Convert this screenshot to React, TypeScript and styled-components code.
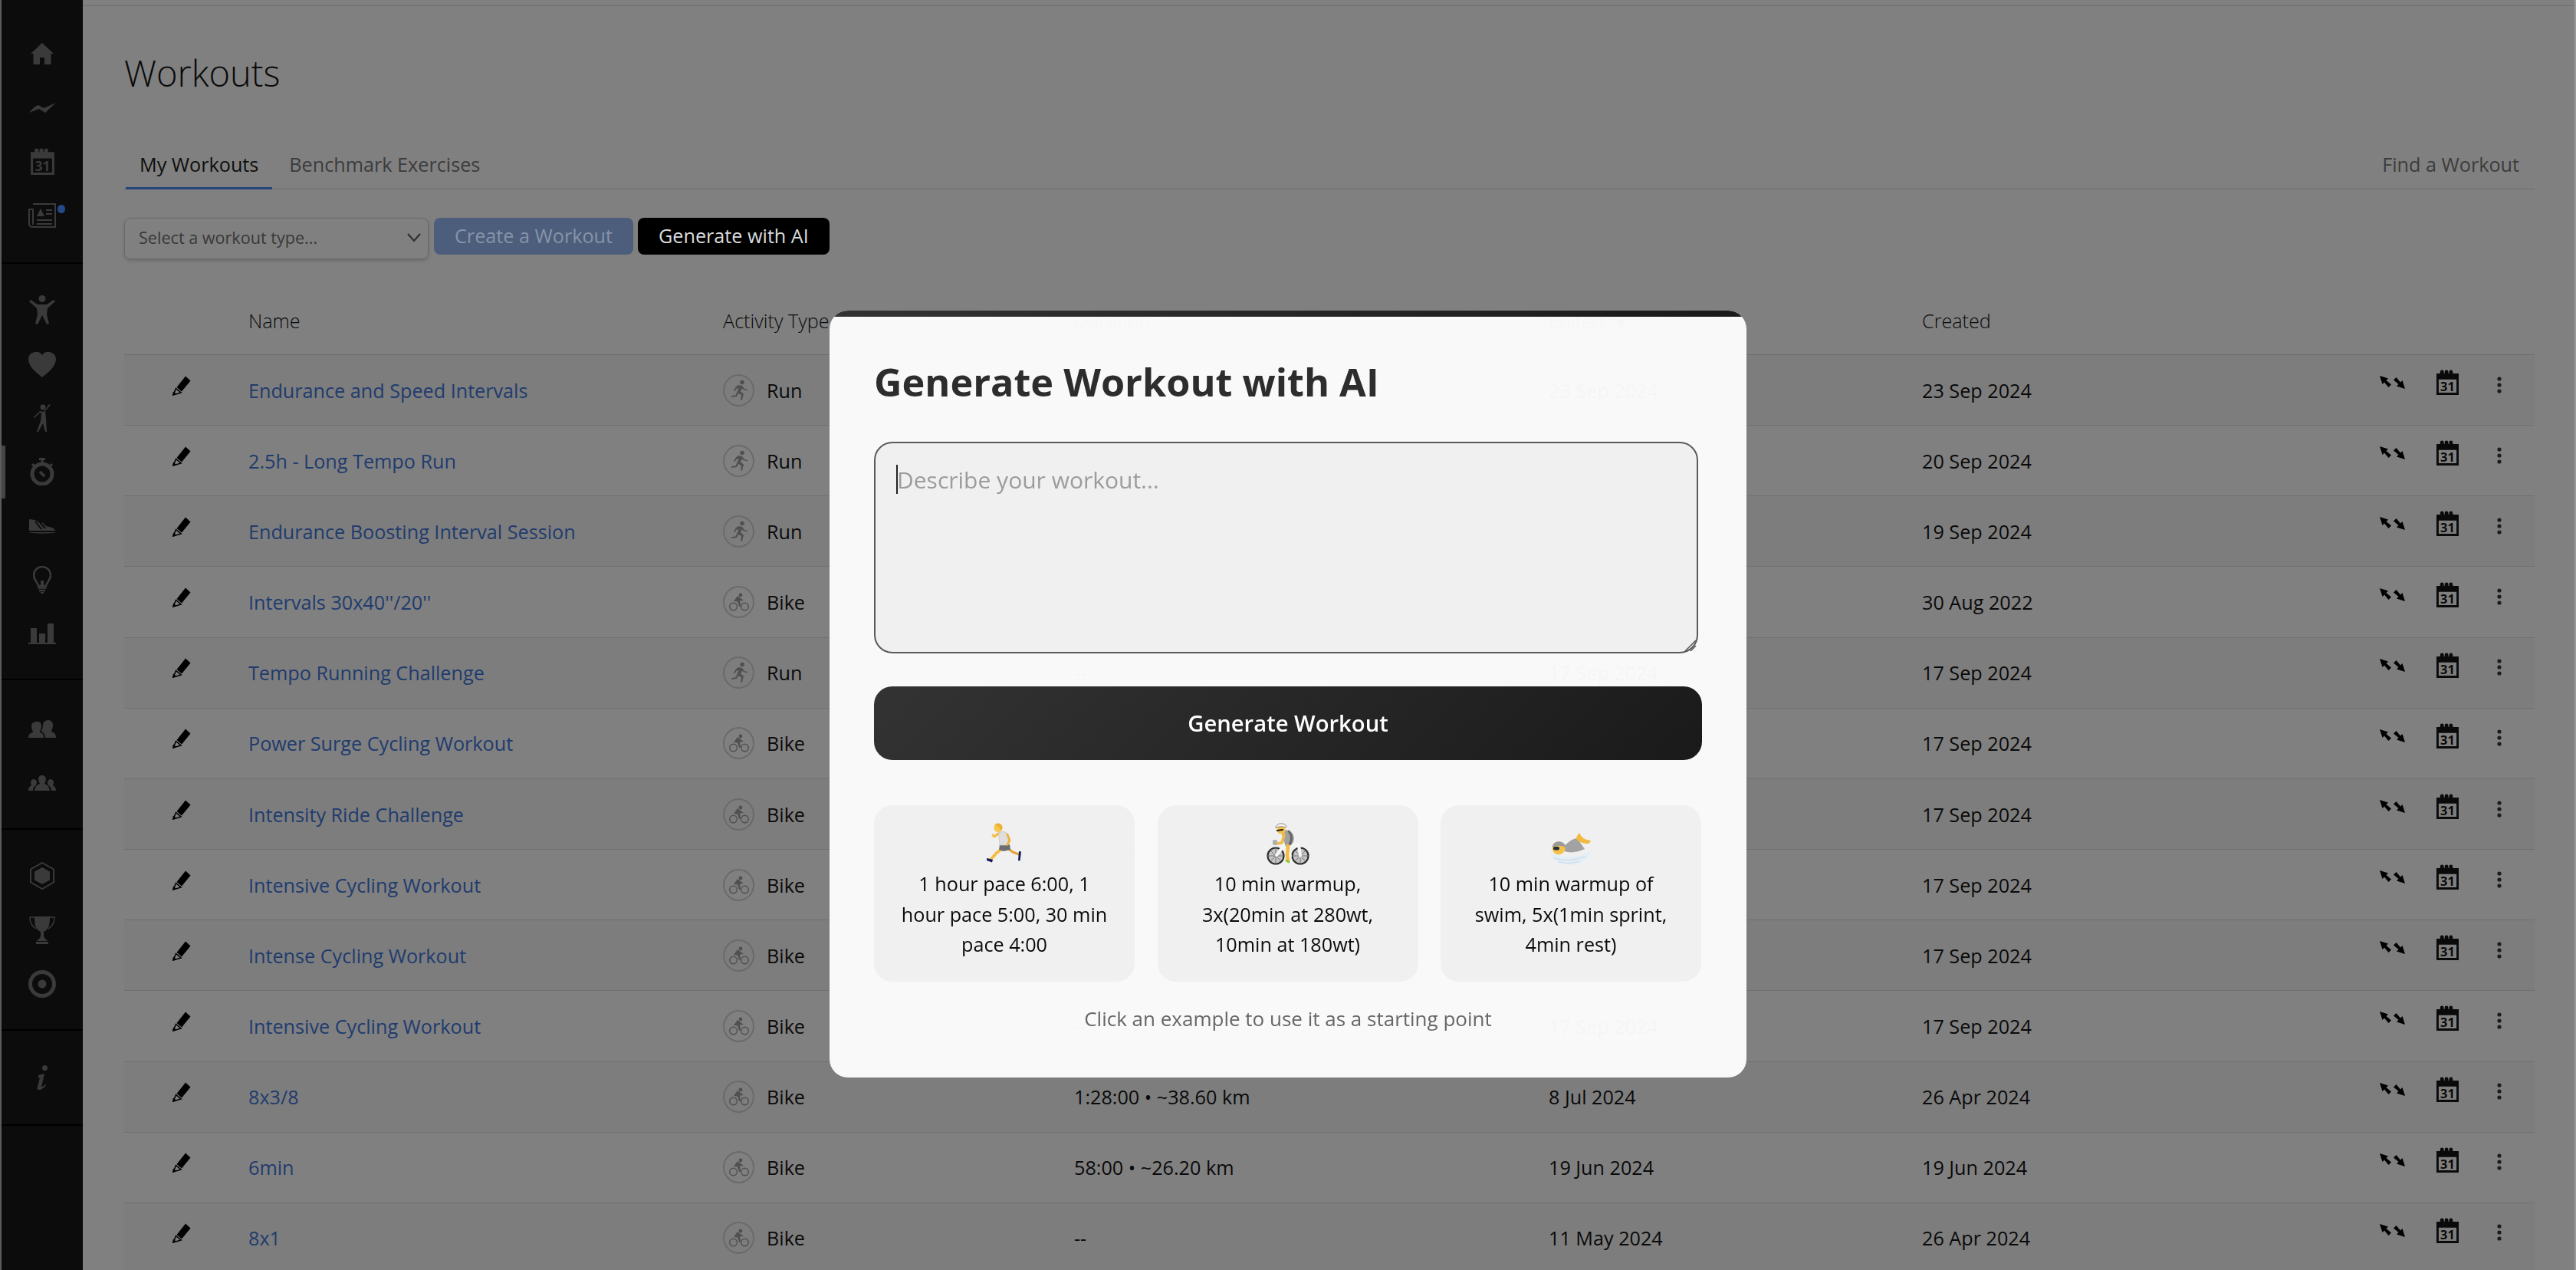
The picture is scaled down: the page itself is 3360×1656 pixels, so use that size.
import styled, { createGlobalStyle } from 'styled-components';
import { ReactNode } from 'react';

const GlobalStyle = createGlobalStyle`
  html, body {
    margin: 0;
    height: 100%;
    overflow: hidden;
    background: #808080;
    font-family: "Open Sans", "Liberation Sans", sans-serif;
  }
  * { box-sizing: border-box; }
`;

const Shell = styled.div`
  display: flex;
  width: 3360px;
  height: 1656px;
  overflow: hidden;
  background: #808080;
`;

const LeftEdge = styled.div`
  width: 2px;
  background: #5c5c5c;
`;

const ScrollEdge = styled.div`
  width: 2px;
  background: #999;
`;

const Sidebar = styled.nav`
  position: relative;
  width: 106px;
  flex-shrink: 0;
  background: #0c0c0c;
  color: #3a3a3a;
`;

const NavSection = styled.div<{ $height: number; $top: number }>`
  height: ${(p) => p.$height}px;
  padding-top: ${(p) => p.$top}px;
  border-bottom: 2px solid #000;
`;

const NavItem = styled.div`
  position: relative;
  height: 70.4px;
  display: flex;
  align-items: center;
  justify-content: center;
`;

const NewsDot = styled.span`
  position: absolute;
  top: 21px;
  left: 73px;
  width: 10px;
  height: 11px;
  border-radius: 50%;
  background: #254a8a;
`;

const ActiveMark = styled.span`
  position: absolute;
  left: 0;
  top: 581px;
  width: 5px;
  height: 69px;
  background: #464646;
`;

const Main = styled.main`
  flex: 1;
  min-width: 0;
`;

const TopRule = styled.div`
  height: 8px;
  border-bottom: 1px solid #6c6c6c;
`;

const Content = styled.div`
  padding: 0 52px 0 54px;
`;

const Title = styled.h1`
  margin: 0;
  padding-top: 54px;
  height: 121px;
  font-size: 47px;
  line-height: 66px;
  font-weight: 300;
  color: #0a0a0a;
`;

const Tabs = styled.div`
  display: flex;
  height: 118px;
  align-items: flex-end;
  border-bottom: 1px solid #6c6c6c;
`;

const Tab = styled.div<{ $active?: boolean }>`
  height: 62px;
  padding: 0 18px;
  margin: ${(p) => (p.$active ? '0 4px 0 2px' : '0')};
  margin-bottom: -1px;
  line-height: 58px;
  font-size: 25.2px;
  color: ${(p) => (p.$active ? '#0e0e0e' : '#3c3c3c')};
  border-bottom: 3px solid ${(p) => (p.$active ? '#254479' : 'transparent')};
`;

const FindLink = styled(Tab)`
  margin-left: auto;
  padding-right: 20px;
`;

const Toolbar = styled.div`
  display: flex;
  align-items: flex-start;
  gap: 6px;
  padding-top: 37px;
  height: 159px;
`;

const SelectBox = styled.div`
  width: 397px;
  height: 54px;
  margin-right: 1px;
  padding: 0 8px 3px 18px;
  display: flex;
  align-items: center;
  justify-content: space-between;
  font-size: 21.6px;
  color: #383838;
  border: 1px solid #6a6a6a;
  border-radius: 8px;
  box-shadow: 0 2px 4px rgba(0, 0, 0, 0.18);
`;

const ActionButton = styled.div<{ $dark?: boolean }>`
  height: 48px;
  padding: 0 27px;
  line-height: 46px;
  font-size: 25.2px;
  border-radius: 8px;
  background: ${(p) => (p.$dark ? '#000' : '#4c5e7c')};
  color: ${(p) => (p.$dark ? '#dcdcdc' : '#8693a8')};
`;

const GRID = '162px 619px 458px 619px 487px 553px 1fr';

const HeaderRow = styled.div`
  display: grid;
  grid-template-columns: ${GRID};
  height: 57px;
  border-bottom: 1px solid #6c6c6c;
  font-size: 25.2px;
  font-weight: 300;
  line-height: 24px;
  color: #0a0a0a;
`;

const SortArrow = styled.span`
  margin-left: 14px;
  font-size: 18px;
`;

const Row = styled.div<{ $striped: boolean }>`
  display: grid;
  grid-template-columns: ${GRID};
  height: 92.17px;
  border-bottom: 1px solid #6f6f6f;
  background: ${(p) => (p.$striped ? '#7d7d7d' : '#808080')};
  font-size: 25.2px;
  color: #0a0a0a;
`;

const Cell = styled.div`
  display: flex;
  align-items: center;
  min-width: 0;
`;

const PencilCell = styled(Cell)`
  padding: 0 0 12px 62px;
`;

const NameLink = styled.a`
  color: #203b6e;
  text-decoration: none;
`;

const Badge = styled.span`
  width: 41px;
  height: 42px;
  margin-right: 16px;
  display: flex;
  align-items: center;
  justify-content: center;
  border: 2px solid #6a6a6a;
  border-radius: 50%;
  color: #505050;
`;

const ActionsCell = styled(Cell)`
  padding: 0 0 20px 44px;
  gap: 41px;
`;

const Dots = styled.svg`
  margin: 6px 0 0 8px;
`;

const Overlay = styled.div`
  position: fixed;
  inset: 0;
  display: flex;
  justify-content: center;
  align-items: flex-start;
  padding-top: 405px;
`;

const Modal = styled.div`
  position: relative;
  width: 1196px;
  padding: 58px 58px 58px;
  border-radius: 24px;
  overflow: hidden;
  background: rgba(253, 253, 253, 0.97);

  &::before {
    content: '';
    position: absolute;
    top: 0;
    left: 0;
    right: 0;
    height: 8px;
    background: linear-gradient(90deg, #333, #1a1a1a);
  }
`;

const ModalTitle = styled.h2`
  margin: 0 0 43px;
  height: 70px;
  font-size: 50.4px;
  line-height: 70px;
  font-weight: 700;
  color: #2d2d2d;
`;

const PromptBox = styled.div`
  position: relative;
  width: 1075px;
  height: 276px;
`;

const Prompt = styled.textarea`
  display: block;
  width: 100%;
  height: 100%;
  padding: 28px 28px;
  font-family: "Open Sans", "Liberation Sans", sans-serif;
  font-size: 30px;
  line-height: 40px;
  color: #222;
  background: #f0f0f0;
  border: 2px solid #5a5a5a;
  border-radius: 24px;
  outline: none;
  resize: none;

  &::placeholder {
    color: #9c9c9c;
  }
`;

const Caret = styled.span`
  position: absolute;
  left: 29px;
  top: 30px;
  width: 2px;
  height: 38px;
  background: #222;
`;

const ResizeGrip = styled.svg`
  position: absolute;
  right: 2px;
  bottom: 2px;
`;

const GenerateButton = styled.div`
  margin-top: 43px;
  width: 1080px;
  height: 96px;
  line-height: 97px;
  text-align: center;
  font-size: 29.2px;
  font-weight: 600;
  color: #fff;
  border-radius: 24px;
  background: linear-gradient(135deg, #333, #1a1a1a);
`;

const Examples = styled.div`
  display: grid;
  grid-template-columns: repeat(3, 340px);
  gap: 29.5px;
  margin-top: 59px;
`;

const ExampleCard = styled.div`
  height: 230px;
  padding: 23px 32px 0;
  text-align: center;
  font-size: 25.2px;
  line-height: 39.5px;
  color: #0a0a0a;
  background: #f0f0f0;
  border-radius: 24px;
`;

const EmojiBox = styled.div`
  height: 60px;
  display: flex;
  justify-content: center;
`;

const Hint = styled.div`
  margin-top: 29px;
  text-align: center;
  font-size: 26px;
  line-height: 38px;
  color: #666;
`;

const CalendarGlyph = ({ w, h }: { w: number; h: number }) => (
  <svg width={w} height={h} viewBox="0 0 30 34" fill="currentColor">
    <path fillRule="evenodd" d="M0 5h5V3a2.5 2.5 0 0 1 5 0v2h1V3a2.5 2.5 0 0 1 5 0v2h1V3a2.5 2.5 0 0 1 5 0v2h8v29H0zM3 13v18h24V13z" />
    <text x="15" y="29" fontSize="17" fontWeight="700" textAnchor="middle" fontFamily="'Open Sans', sans-serif">31</text>
  </svg>
);

const navIcons: Record<string, ReactNode> = {
  home: (
    <svg width="30" height="28" viewBox="0 0 30 28" fill="currentColor">
      <path d="M15 0l15 14h-3.500v14H18v-9h-6v9H3.500V14H0z" />
    </svg>
  ),
  wave: (
    <svg width="35" height="13" viewBox="0 0 35 13" fill="currentColor">
      <path d="M0 13C4 8 8 4 12 3l7 4 16-7-14 13-8-5c-4 1-8 3-13 5z" />
    </svg>
  ),
  calendar: <CalendarGlyph w={31} h={35} />,
  news: (
    <svg width="36" height="32" viewBox="0 0 36 32" fill="none" stroke="currentColor" strokeWidth="2">
      <path d="M6 1h29v30H5a4 4 0 0 1-4-4V8h5v20" />
      <path d="M11 22h20M11 27h20M23 9h8M23 14h8" />
      <path d="M11 17l5-10 5 10z" fill="currentColor" stroke="none" />
    </svg>
  ),
  person: (
    <svg width="34" height="38" viewBox="0 0 34 38" fill="currentColor">
      <circle cx="17" cy="4.500" r="4.500" />
      <path d="M0 8l2-2 9 6h12l9-6 2 2-10 9-1 8 3 12-3 1-6-12-6 12-3-1 3-12-1-8z" />
    </svg>
  ),
  heart: (
    <svg width="36" height="34" viewBox="0 0 36 34" fill="currentColor">
      <path d="M18 34C8 26 0 19 0 10A10 10 0 0 1 18 5a10 10 0 0 1 18 5c0 9-8 16-18 24z" />
    </svg>
  ),
  golf: (
    <svg width="22" height="36" viewBox="0 0 22 36" fill="currentColor">
      <circle cx="12" cy="4" r="3.500" />
      <path d="M20 0l2 1-7 8 1 10 1 17h-2l-3-11-6 11H4l5-14 1-10-2-1-7 7-1-1 8-8 5 1z" />
    </svg>
  ),
  stopwatch: (
    <svg width="32" height="36" viewBox="0 0 32 36" fill="none" stroke="currentColor">
      <circle cx="16" cy="21" r="13" strokeWidth="5" />
      <path d="M12 1.500h8M16 2v5M3 8l4 4M29 8l-4 4" strokeWidth="3" />
      <path d="M13 18l6 6" strokeWidth="3.500" />
    </svg>
  ),
  shoe: (
    <svg width="36" height="20" viewBox="0 0 36 20" fill="currentColor">
      <path d="M1 1l7 1 9 5 1-2 5 5 8 2 4 3v1H1zM0 18h36c-3 2-30 2-36 0z" />
      <path d="M9 4l8 10M14 4l8 9" stroke="#0c0c0c" strokeWidth="2" />
    </svg>
  ),
  bulb: (
    <svg width="24" height="36" viewBox="0 0 24 36" fill="none" stroke="currentColor" strokeWidth="2.500">
      <path d="M7 26C6 21 1 18 1 12a11 11 0 0 1 22 0c0 6-5 9-6 14z" />
      <path d="M6.500 28.500h11M8 32h8" strokeWidth="2.500" />
      <path d="M12 26v-7" strokeWidth="4" />
      <path d="M10 35h4" strokeWidth="2" />
    </svg>
  ),
  bars: (
    <svg width="36" height="27" viewBox="0 0 36 27" fill="currentColor">
      <path d="M3 6h8v19H3zM14 13h8v12h-8zM25 0h8v25h-8zM0 25h36v2H0z" />
    </svg>
  ),
  people: (
    <svg width="36" height="23" viewBox="0 0 36 23" fill="currentColor">
      <path d="M12 2c3 0 5 2 5 6s-2 6-2 8c4 1 5 3 5 7H0c0-4 2-6 6-7 0-2-2-4-2-8s3-6 8-6z" />
      <path d="M26 0c4 0 6 3 6 7s-2 6-2 8c4 1 6 4 6 8H22c0-4-2-7-5-8 0-2 2-4 2-8s3-7 7-7z" />
    </svg>
  ),
  group: (
    <svg width="36" height="20" viewBox="0 0 36 20" fill="currentColor">
      <path d="M18 0c3 0 5 2 5 5s-2 5-2 6c4 1 6 4 7 9H8c1-5 3-8 7-9 0-1-2-3-2-6s2-5 5-5z" />
      <path d="M7 5c2 0 4 2 4 4s-1 3-1 4c-2 1-4 3-4 7H0c0-4 2-6 4-7 0-1-1-2-1-4s2-4 4-4zM29 5c2 0 4 2 4 4s-1 3-1 4c2 1 4 3 4 7h-6c0-4-2-6-4-7 0-1-1-2-1-4s2-4 4-4z" />
    </svg>
  ),
  hexagon: (
    <svg width="32" height="36" viewBox="0 0 32 36" fill="currentColor">
      <path d="M16 1l15 8.500v17L16 35 1 26.500v-17z" fill="none" stroke="currentColor" strokeWidth="2" />
      <path d="M16 7l10 5.500v11L16 29 6 23.500v-11z" />
    </svg>
  ),
  trophy: (
    <svg width="34" height="36" viewBox="0 0 34 36" fill="currentColor">
      <path d="M7 0h20c0 10-1 17-8 20v6c1 3 4 4 5 6H10c1-2 4-3 5-6v-6C8 17 7 10 7 0zM9 33h16v3H9z" />
      <path d="M7 1H1c0 7 3 12 8 15M27 1h6c0 7-3 12-8 15" fill="none" stroke="currentColor" strokeWidth="1.500" />
    </svg>
  ),
  target: (
    <svg width="36" height="36" viewBox="0 0 36 36" fill="none" stroke="currentColor">
      <circle cx="18" cy="18" r="15.500" strokeWidth="5" />
      <circle cx="18" cy="18" r="5.500" fill="currentColor" stroke="none" />
    </svg>
  ),
  info: (
    <svg width="14" height="34" viewBox="0 0 14 34" fill="currentColor">
      <circle cx="10.500" cy="3.500" r="3.500" />
      <path d="M2 13l8-2-4 17c2 0 3-1 5-3l1 1c-3 4-6 6-9 6-2 0-3-1-2-4l3-12-2 .5z" />
    </svg>
  ),
};

const PencilIcon = () => (
  <svg width="25" height="26" viewBox="0 0 25 26">
    <path d="M6.500 15L18 0.500l6.500 6L13 20.500z" fill="#000" />
    <path d="M5.500 16.500l6.500 5.500-10 3z" fill="none" stroke="#000" strokeWidth="1.600" />
    <path d="M1 25.500l1-5 4 3.500z" fill="#000" />
  </svg>
);

const ExpandIcon = () => (
  <svg width="33" height="17" viewBox="0 0 33 17" fill="#000">
    <path d="M0 0L11 3.500 8.500 6 15 11.500 11.500 15 6 8.500 3.500 11z" />
    <path d="M33 17L22 13.500 24.500 11 18 5.500 21.500 2 27 8.500 29.500 6z" />
  </svg>
);

const RunGlyph = () => (
  <svg width="24" height="28" viewBox="0 0 24 28" fill="currentColor">
    <circle cx="16" cy="3.500" r="2.800" />
    <path d="M11 7l5 1 3 4 4 1-.5 1.500-5-1.500-1.500-1.500-2 4 4 3-2 8h-2l1-6.500-4-2-2 4-7 1 .000-1.800 5.500-1 4-9-3 .5-2 3.500-1.500-1 3-5z" />
  </svg>
);

const BikeGlyph = () => (
  <svg width="26" height="24" viewBox="0 0 26 24" fill="none" stroke="currentColor" strokeWidth="1.400">
    <circle cx="5.500" cy="18" r="4.800" />
    <circle cx="20.500" cy="18" r="4.800" />
    <circle cx="15" cy="3" r="2.400" fill="currentColor" stroke="none" />
    <path d="M6 11l5-7 4 3 4 3-5 .5 1 7-2 .5-2-6.500z" fill="currentColor" stroke="none" />
  </svg>
);

const RunnerEmoji = () => (
  <svg width="48" height="52" viewBox="0 0 48 52" fill="none" strokeLinecap="round" strokeLinejoin="round">
    <path d="M28 33l7 5 8 3" stroke="#e5a735" strokeWidth="3.200" />
    <path d="M22 33l-8 6-7 8" stroke="#f4bd45" strokeWidth="4" />
    <path d="M43 37l-1 12 2.500 .5 1.500-12z" fill="#141c5c" />
    <path d="M1 46l5 1 3 1-1 3.500-7-2.500z" fill="#141c5c" />
    <path d="M18 28h13l1 7-9 2-6-2z" fill="#6e6e6e" />
    <path d="M16 13c4-2 9-2 12 1l2 7-1 8H18c0-5-1-10-2-16z" fill="#dedede" stroke="#c4c4c4" strokeWidth="0.800" />
    <path d="M16 14l-5 4-2-2" stroke="#f4bd45" strokeWidth="3" />
    <path d="M28 15l3 8-3 5" stroke="#eeb23e" strokeWidth="3" />
    <circle cx="16" cy="6.500" r="5.500" fill="#f7c64e" />
    <path d="M11 3c3-4 9-3 10 1 1 3 0 5-1 6-1-3-5-6-9-7z" fill="#eab136" />
  </svg>
);

const CyclistEmoji = () => (
  <svg width="58" height="56" viewBox="0 0 58 56" fill="none" strokeLinecap="round" strokeLinejoin="round">
    <circle cx="13" cy="43" r="10.500" fill="#c4c4c4" stroke="#2e2e2e" strokeWidth="2.200" />
    <circle cx="45" cy="43" r="10.500" fill="#c4c4c4" stroke="#2e2e2e" strokeWidth="2.200" />
    <path d="M13 33v20M3 43h20M6 36l14 14M20 36L6 50M45 33v20M35 43h20M38 36l14 14M52 36L38 50" stroke="#777" strokeWidth="1" />
    <path d="M14 42l11-14 18 1 2 14M25 28l7 15" stroke="#f6f6f6" strokeWidth="4" />
    <path d="M20 12c5-4 11-3 15 2 3 5 2 11-2 15l-7 2z" fill="#a0a0a0" />
    <path d="M30 11c4 4 5 11 1 17" stroke="#666" strokeWidth="3" />
    <path d="M24 15l-3 11-7 1" stroke="#f3bb42" strokeWidth="3.500" />
    <path d="M29 30l-1 12 1 7" stroke="#f3bb42" strokeWidth="4.500" />
    <path d="M27 49l3 2" stroke="#97c63c" strokeWidth="3" />
    <rect x="9" y="22" width="6" height="7" rx="2" fill="#b0b0b0" />
    <circle cx="20" cy="9" r="5.500" fill="#f5c14a" />
    <path d="M13 6c1-6 10-7 14-2l-1 2C21 4 17 5 13 6z" fill="#f6f6f6" stroke="#8a8a8a" strokeWidth="1" />
    <path d="M15 10l7-1" stroke="#1c1c1c" strokeWidth="2.200" />
  </svg>
);

const SwimmerEmoji = () => (
  <svg width="60" height="56" viewBox="0 -12 60 56" fill="none" strokeLinecap="round" strokeLinejoin="round">
    <path d="M2 26c12 8 36 8 54-1-4 10-12 18-26 18C16 43 6 36 2 26z" fill="#e4eef5" />
    <path d="M8 34c12 4 26 3 40-2M14 39c9 2 18 2 27-1" stroke="#cfe0ec" strokeWidth="1.500" />
    <path d="M20 20c6-7 11-11 18-12l10 14c-8 4-19 6-26 3z" fill="#a2a2a2" />
    <path d="M37 9c0-3 2-6 4-8 2 5 6 9 15 10-1 2-2 4-3 4-7 0-12-2-16-6z" fill="#f2b93f" />
    <circle cx="14" cy="21" r="8.500" fill="#f5c14a" />
    <path d="M6 20c0-7 8-10 14-6 2 2 3 4 3 6-6-3-12-3-17 0z" fill="#9a9a9a" />
    <rect x="7" y="19" width="8" height="4.500" rx="2.200" fill="#1f2d3a" />
  </svg>
);

const navSections = [
  { height: 344, top: 35, items: ['home', 'wave', 'calendar', 'news'] },
  { height: 543, top: 25, items: ['person', 'heart', 'golf', 'stopwatch', 'shoe', 'bulb', 'bars'] },
  { height: 195, top: 28, items: ['people', 'group'] },
  { height: 262, top: 25, items: ['hexagon', 'trophy', 'target'] },
  { height: 124, top: 27, items: ['info'] },
];

interface Workout {
  name: string;
  activity: 'Run' | 'Bike';
  duration: string;
  edited: string;
  created: string;
}

const workouts: Workout[] = [
  { name: 'Endurance and Speed Intervals', activity: 'Run', duration: '--', edited: '23 Sep 2024', created: '23 Sep 2024' },
  { name: '2.5h - Long Tempo Run', activity: 'Run', duration: '--', edited: '20 Sep 2024', created: '20 Sep 2024' },
  { name: 'Endurance Boosting Interval Session', activity: 'Run', duration: '--', edited: '19 Sep 2024', created: '19 Sep 2024' },
  { name: "Intervals 30x40''/20''", activity: 'Bike', duration: '--', edited: '30 Aug 2022', created: '30 Aug 2022' },
  { name: 'Tempo Running Challenge', activity: 'Run', duration: '--', edited: '17 Sep 2024', created: '17 Sep 2024' },
  { name: 'Power Surge Cycling Workout', activity: 'Bike', duration: '--', edited: '17 Sep 2024', created: '17 Sep 2024' },
  { name: 'Intensity Ride Challenge', activity: 'Bike', duration: '--', edited: '17 Sep 2024', created: '17 Sep 2024' },
  { name: 'Intensive Cycling Workout', activity: 'Bike', duration: '--', edited: '17 Sep 2024', created: '17 Sep 2024' },
  { name: 'Intense Cycling Workout', activity: 'Bike', duration: '--', edited: '17 Sep 2024', created: '17 Sep 2024' },
  { name: 'Intensive Cycling Workout', activity: 'Bike', duration: '--', edited: '17 Sep 2024', created: '17 Sep 2024' },
  { name: '8x3/8', activity: 'Bike', duration: '1:28:00 • ~38.60 km', edited: '8 Jul 2024', created: '26 Apr 2024' },
  { name: '6min', activity: 'Bike', duration: '58:00 • ~26.20 km', edited: '19 Jun 2024', created: '19 Jun 2024' },
  { name: '8x1', activity: 'Bike', duration: '--', edited: '11 May 2024', created: '26 Apr 2024' },
];

const examples = [
  { emoji: <RunnerEmoji />, text: '1 hour pace 6:00, 1 hour pace 5:00, 30 min pace 4:00' },
  { emoji: <CyclistEmoji />, text: '10 min warmup, 3x(20min at 280wt, 10min at 180wt)' },
  { emoji: <SwimmerEmoji />, text: '10 min warmup of swim, 5x(1min sprint, 4min rest)' },
];

function App() {
  return (
    <Shell>
      <GlobalStyle />
      <LeftEdge />
      <Sidebar>
        <ActiveMark />
        {navSections.map((section) => (
          <NavSection key={section.items[0]} $height={section.height} $top={section.top}>
            {section.items.map((item) => (
              <NavItem key={item}>
                {navIcons[item]}
                {item === 'news' && <NewsDot />}
              </NavItem>
            ))}
          </NavSection>
        ))}
      </Sidebar>
      <Main>
        <TopRule />
        <Content>
          <Title>Workouts</Title>
          <Tabs>
            <Tab $active>My Workouts</Tab>
            <Tab>Benchmark Exercises</Tab>
            <FindLink>Find a Workout</FindLink>
          </Tabs>
          <Toolbar>
            <SelectBox>
              Select a workout type...
              <svg width="20" height="14" viewBox="0 0 20 14" fill="none" stroke="#2c2c2c" strokeWidth="2">
                <path d="M2 2l8 9 8-9" />
              </svg>
            </SelectBox>
            <ActionButton>Create a Workout</ActionButton>
            <ActionButton $dark>Generate with AI</ActionButton>
          </Toolbar>
          <HeaderRow>
            <span />
            <span>Name</span>
            <span>Activity Type</span>
            <span>Duration</span>
            <span>Edited<SortArrow>▼</SortArrow></span>
            <span>Created</span>
            <span />
          </HeaderRow>
          {workouts.map((workout, index) => (
            <Row key={index} $striped={index % 2 === 0}>
              <PencilCell><PencilIcon /></PencilCell>
              <Cell><NameLink>{workout.name}</NameLink></Cell>
              <Cell>
                <Badge>{workout.activity === 'Run' ? <RunGlyph /> : <BikeGlyph />}</Badge>
                {workout.activity}
              </Cell>
              <Cell>{workout.duration}</Cell>
              <Cell>{workout.edited}</Cell>
              <Cell>{workout.created}</Cell>
              <ActionsCell>
                <ExpandIcon />
                <CalendarGlyph w={29} h={33} />
                <Dots width="8" height="24" viewBox="0 0 8 24" fill="#1c1c1c">
                  <circle cx="4" cy="4" r="2.600" />
                  <circle cx="4" cy="12" r="2.600" />
                  <circle cx="4" cy="20" r="2.600" />
                </Dots>
              </ActionsCell>
            </Row>
          ))}
        </Content>
      </Main>
      <ScrollEdge />
      <Overlay>
        <Modal>
          <ModalTitle>Generate Workout with AI</ModalTitle>
          <PromptBox>
            <Prompt placeholder="Describe your workout..." />
            <Caret />
            <ResizeGrip width="18" height="18" viewBox="0 0 18 18" fill="none" stroke="#555" strokeWidth="1.500">
              <path d="M3 17L17 3M10 17l7-7" />
            </ResizeGrip>
          </PromptBox>
          <GenerateButton>Generate Workout</GenerateButton>
          <Examples>
            {examples.map((example) => (
              <ExampleCard key={example.text}>
                <EmojiBox>{example.emoji}</EmojiBox>
                {example.text}
              </ExampleCard>
            ))}
          </Examples>
          <Hint>Click an example to use it as a starting point</Hint>
        </Modal>
      </Overlay>
    </Shell>
  );
}

export default App;
